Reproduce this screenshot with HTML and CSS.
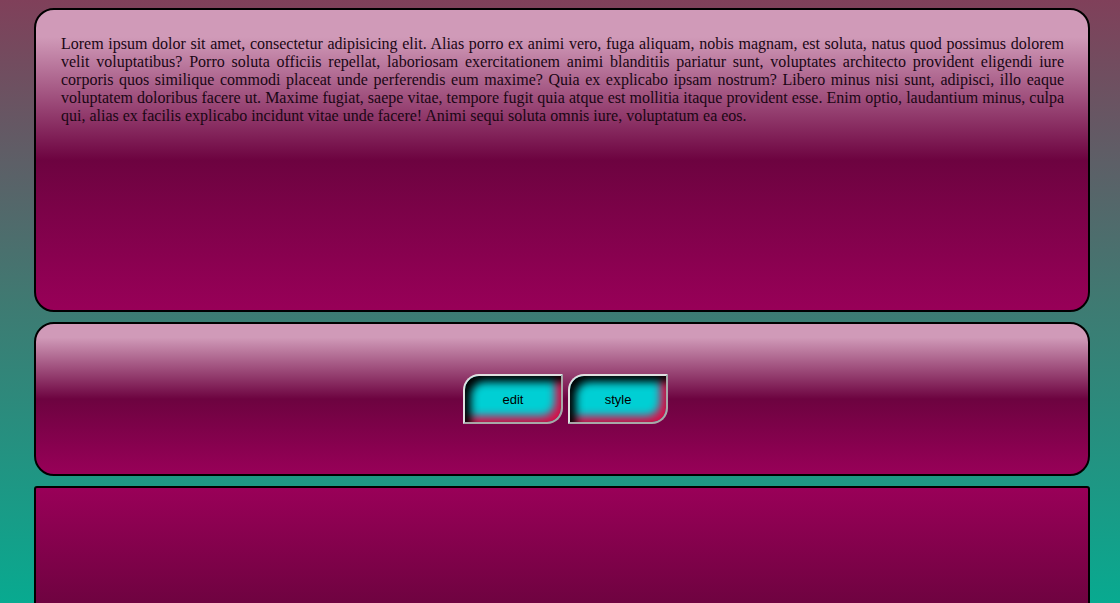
FILE: index.html
```html
<!DOCTYPE html>
<html>
<head>
<meta charset="utf-8">
<link rel="stylesheet" href="styles.css">
</head>
<body>
<div class="page">
  <section class="panel panel-text">
    <p>Lorem ipsum dolor sit amet, consectetur adipisicing elit. Alias porro ex animi vero, fuga aliquam, nobis magnam, est soluta, natus quod possimus dolorem velit voluptatibus? Porro soluta officiis repellat, laboriosam exercitationem animi blanditiis pariatur sunt, voluptates architecto provident eligendi iure corporis quos similique commodi placeat unde perferendis eum maxime? Quia ex explicabo ipsam nostrum? Libero minus nisi sunt, adipisci, illo eaque voluptatem doloribus facere ut. Maxime fugiat, saepe vitae, tempore fugit quia atque est mollitia itaque provident esse. Enim optio, laudantium minus, culpa qui, alias ex facilis explicabo incidunt vitae unde facere! Animi sequi soluta omnis iure, voluptatum ea eos.</p>
  </section>
  <section class="panel panel-buttons">
    <button class="btn">edit</button>
    <button class="btn">style</button>
  </section>
  <section class="panel-bottom"></section>
</div>
</body>
</html>
```
FILE: styles.css
```css
html {
  height: 100%;
  background: linear-gradient(#80405a 0%, #3f7a72 50%, #08aa90 100%) fixed;
}
body {
  margin: 0;
  height: 603px;
  overflow: hidden;
}
.page {
  padding: 8px 30px 0 34px;
  display: flex;
  flex-direction: column;
  gap: 10px;
}
.panel {
  border: 2px solid #000;
  border-radius: 20px;
  background: linear-gradient(#d09ab8 0%, #d09ab8 9%, #6d0340 50%, #980058 100%);
  box-sizing: border-box;
}
.panel-text {
  height: 304px;
  padding: 25px 24px 0 25px;
}
.panel-text p {
  margin: 0;
  font-family: "Liberation Serif", "Times New Roman", serif;
  font-size: 16px;
  line-height: 18px;
  text-align: justify;
  color: #1a0614;
}
.panel-buttons {
  height: 154px;
  display: flex;
  justify-content: center;
  align-items: center;
  gap: 5px;
  padding-left: 7px;
}
.btn {
  width: 100px;
  height: 50px;
  box-sizing: border-box;
  border: 2px solid;
  border-color: #e0e0e0 #a8a8a8 #a8a8a8 #e0e0e0;
  border-radius: 16px 0 16px 0;
  background: #00cfd4;
  box-shadow: inset 6px 6px 8px #000, inset -6px -6px 8px #d8104a;
  font-family: "Liberation Sans", Arial, sans-serif;
  font-size: 13px;
  color: #000;
  padding: 1px 0 0;
}
.panel-bottom {
  height: 300px;
  border: 2px solid #000;
  border-radius: 3px;
  background: linear-gradient(#990058 0px, #6e0340 117px, #6e0340 100%);
}
```
